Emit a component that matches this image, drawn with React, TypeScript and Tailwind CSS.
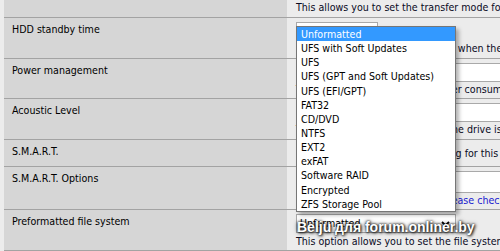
import React from 'react';

const options = [
  'Unformatted',
  'UFS with Soft Updates',
  'UFS',
  'UFS (GPT and Soft Updates)',
  'UFS (EFI/GPT)',
  'FAT32',
  'CD/DVD',
  'NTFS',
  'EXT2',
  'exFAT',
  'Software RAID',
  'Encrypted',
  'ZFS Storage Pool',
];

interface RowProps {
  label?: string;
  height: string;
  children?: React.ReactNode;
  center?: boolean;
}

const Row: React.FC<RowProps> = ({ label, height, children, center }) => (
  <div className={`flex border-b border-[#a3a3a3] ${height}`}>
    <div className="w-[283px] shrink-0 bg-[#d6d6d6] pl-[8px] pt-[4px] leading-[14px] text-black">
      {label}
    </div>
    <div
      className={`flex-1 bg-[#ececec] pl-[9px] whitespace-nowrap leading-[14px] text-[#0a0a1e] ${
        center ? 'flex items-center' : 'pt-[4px]'
      }`}
    >
      {children}
    </div>
  </div>
);

const Box: React.FC<{ className?: string; children?: React.ReactNode }> = ({ className, children }) => (
  <div className={`h-[19px] border border-[#a9a9a9] bg-white pl-[3px] leading-[17px] text-black ${className ?? ''}`}>
    {children}
  </div>
);

export default function App() {
  return (
    <div className="relative w-[500px] h-[251px] overflow-hidden bg-[#ececec] pl-[4px] text-[10.6px] font-['DejaVu_Sans_Condensed','DejaVu_Sans',sans-serif]">
      <div className="flex h-[18px] border-b border-[#a3a3a3]">
        <div className="w-[283px] shrink-0 bg-[#d6d6d6]" />
        <div className="flex-1 bg-[#ececec] pl-[9px] whitespace-nowrap leading-[14px] text-[#0a0a1e]">
          This allows you to set the transfer mode for this drive.
        </div>
      </div>

      <Row label="HDD standby time" height="h-[41px]">
        <Box className="w-[82px]">Always on</Box>
        <div>Puts the drive into standby mode when the selected amount of time after the last access.</div>
      </Row>

      <Row label="Power management" height="h-[40px]">
        <Box className="w-[300px]">Disabled</Box>
        <div>This allows you to lower the power consumption of the drive.</div>
      </Row>

      <Row label="Acoustic Level" height="h-[41px]">
        <Box className="w-[300px]">Disabled</Box>
        <div>This allows you to set how loud the drive is while it's operating.</div>
      </Row>

      <Row label="S.M.A.R.T." height="h-[27px]" center>
        <span className="ml-[1px] mr-[8px] inline-block h-[13px] w-[13px] border border-[#767676] bg-white" />
        <span>Activate S.M.A.R.T. monitoring for this drive.</span>
      </Row>

      <Row label="S.M.A.R.T. Options" height="h-[43px]">
        <div className="h-[22px] w-[300px] border border-[#a9a9a9] bg-white" />
        <div>
          Extra options (usually empty). <span className="text-[#1a1ad0]">Please check the documentation.</span>
        </div>
      </Row>

      <Row label="Preformatted file system" height="h-[41px]">
        <Box className="flex w-[160px] items-center justify-between pr-[5px]">
          <span>Unformatted</span>
          <svg width="9" height="6" viewBox="0 0 9 6">
            <polyline points="1,1 4.5,4.5 8,1" fill="none" stroke="#000" strokeWidth="1.8" />
          </svg>
        </Box>
        <div className="mt-[1px]">This option allows you to set the file system for preformatted hard disks containing data.</div>
      </Row>

      <div className="absolute left-[296px] top-[26px] w-[160px] border border-[#767676] bg-white shadow-[3px_3px_4px_rgba(0,0,0,0.3)]">
        {options.map((o, i) => (
          <div
            key={o}
            className={`h-[14.15px] pl-[4px] leading-[14px] whitespace-nowrap ${
              i === 0 ? 'bg-[#3399ff] text-white' : 'text-black'
            }`}
          >
            {o}
          </div>
        ))}
      </div>

      <div className="absolute left-[297px] top-[219px] whitespace-nowrap text-[14px] font-bold leading-[16px] text-white font-['Liberation_Sans',Arial,sans-serif] [text-shadow:0_0_2px_rgba(0,0,0,0.9),0_0_4px_rgba(0,0,0,0.7),1px_1px_3px_rgba(0,0,0,0.9)]">
        Belju для forum.onliner.by
      </div>
    </div>
  );
}
